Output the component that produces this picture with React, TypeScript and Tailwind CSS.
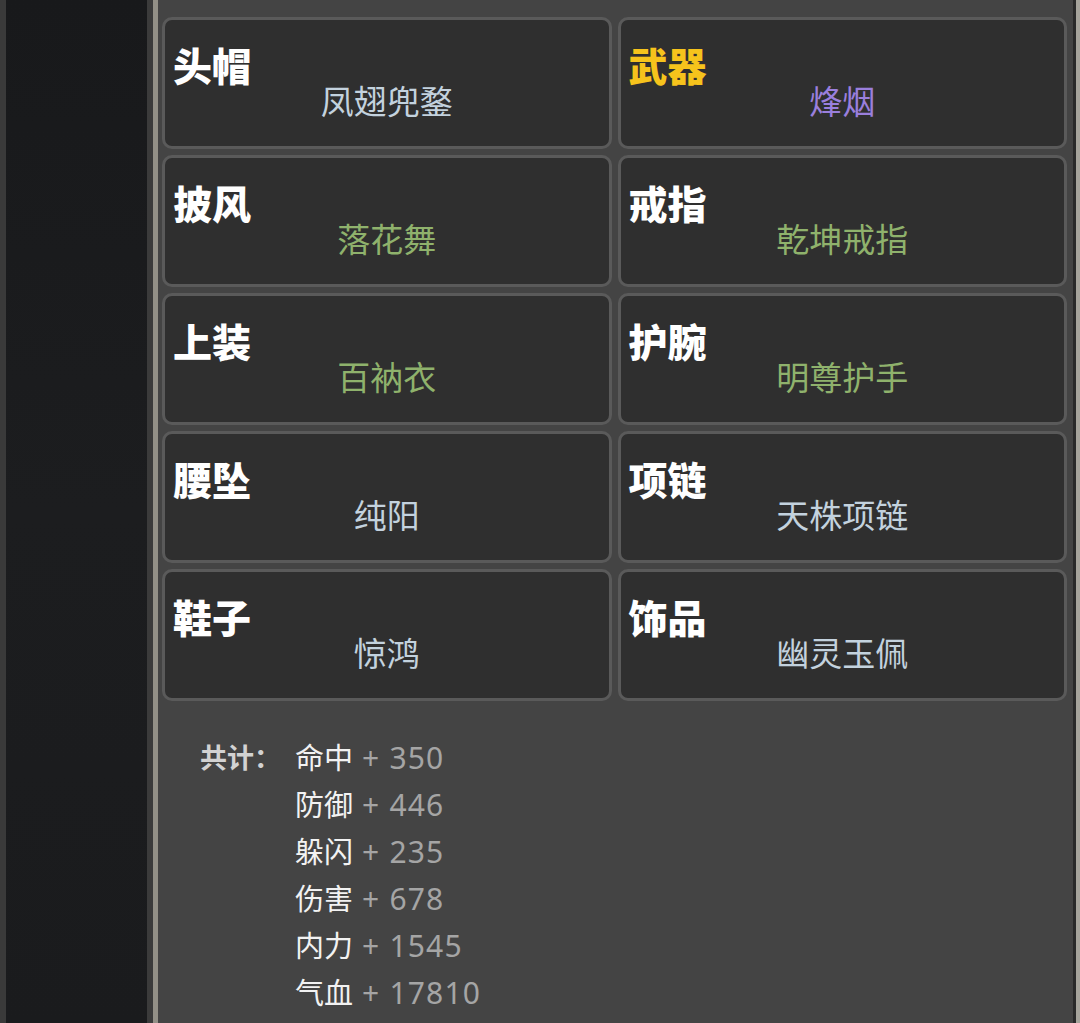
const slots = [
  { slot: "头帽", item: "凤翅兜鍪", slotColor: "text-white", itemColor: "text-[#c3d2de]" },
  { slot: "武器", item: "烽烟", slotColor: "text-[#f6c31c]", itemColor: "text-[#9a7fdd]" },
  { slot: "披风", item: "落花舞", slotColor: "text-white", itemColor: "text-[#8fb26c]" },
  { slot: "戒指", item: "乾坤戒指", slotColor: "text-white", itemColor: "text-[#8fb26c]" },
  { slot: "上装", item: "百衲衣", slotColor: "text-white", itemColor: "text-[#8fb26c]" },
  { slot: "护腕", item: "明尊护手", slotColor: "text-white", itemColor: "text-[#8fb26c]" },
  { slot: "腰坠", item: "纯阳", slotColor: "text-white", itemColor: "text-[#c3d2de]" },
  { slot: "项链", item: "天株项链", slotColor: "text-white", itemColor: "text-[#c3d2de]" },
  { slot: "鞋子", item: "惊鸿", slotColor: "text-white", itemColor: "text-[#c3d2de]" },
  { slot: "饰品", item: "幽灵玉佩", slotColor: "text-white", itemColor: "text-[#c3d2de]" },
];

const totals = [
  { name: "命中", value: 350 },
  { name: "防御", value: 446 },
  { name: "躲闪", value: 235 },
  { name: "伤害", value: 678 },
  { name: "内力", value: 1545 },
  { name: "气血", value: 17810 },
];

const font = "font-['Noto_Sans','Noto_Sans_CJK_SC',sans-serif]";

export default function App() {
  return (
    <div className={`flex h-[1023px] w-full overflow-hidden ${font}`}>
      {/* left backdrop */}
      <div className="w-[6px] bg-[#3a3a3a]" />
      <div className="w-[141px] bg-gradient-to-b from-[#18191b] via-[#1c1d1f] to-[#1a1b1d]" />
      <div className="w-[6px] bg-[#3b3b3b]" />
      <div className="w-[5px] bg-[#939087]" />

      <main className="flex-1 bg-[#444444] pl-[4px] pr-[6px] pt-[17px]">
        <div className="grid grid-cols-2 gap-[6px]">
          {slots.map((s) => (
            <div
              key={s.slot}
              className="flex h-[132px] flex-col rounded-[10px] border-[3px] border-[#5a5a5a] bg-[#2f2f2f] pl-[8px] pt-[24px]"
            >
              <div className={`text-[39px] leading-[44px] font-black ${s.slotColor}`}>{s.slot}</div>
              <div className={`-mt-[6px] pr-[8px] text-center text-[33px] leading-[40px] ${s.itemColor}`}>
                {s.item}
              </div>
            </div>
          ))}
        </div>

        <div className="mt-[33px] flex pl-[38px]">
          <div className="w-[95px] text-[27px] leading-[47px] font-bold text-[#d2d2d2]">共计：</div>
          <div className="flex flex-col">
            {totals.map((t) => (
              <div key={t.name} className="text-[29px] leading-[47px]">
                <span className="text-[#f2f2f2]">{t.name}</span>
                <span className="text-[30px] tracking-[0.04em] text-[#a5a5a5]"> + {t.value}</span>
              </div>
            ))}
          </div>
        </div>
      </main>

      {/* right edge */}
      <div className="w-[3px] bg-[#2a2a2a]" />
      <div className="w-[4px] bg-[#a6a49c]" />
    </div>
  );
}
